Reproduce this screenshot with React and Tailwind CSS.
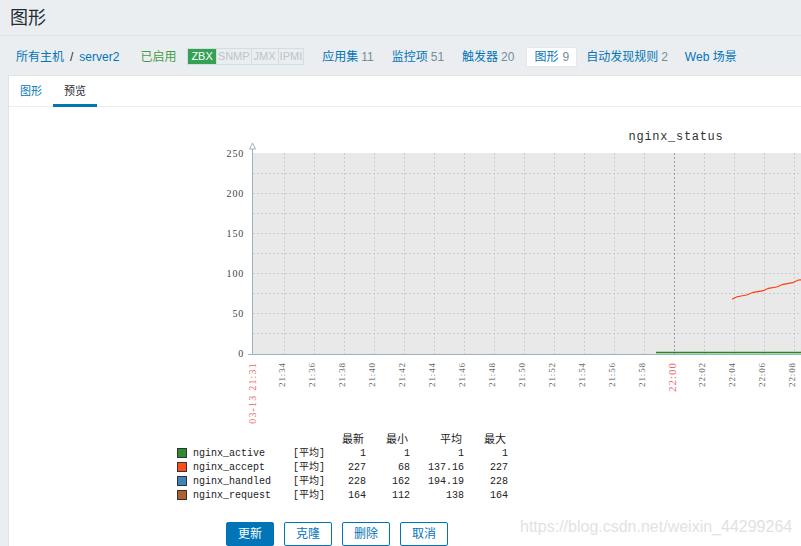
import React from 'react';

// 图形预览页面 (Zabbix 主机图形预览)
const navItems = [
  { label: '应用集', count: 11 },
  { label: '监控项', count: 51 },
  { label: '触发器', count: 20 },
];

const legend = [
  { name: 'nginx_active', color: '#2e8b2e', last: '1', min: '1', avg: '1', max: '1' },
  { name: 'nginx_accept', color: '#ff4d1a', last: '227', min: '68', avg: '137.16', max: '227' },
  { name: 'nginx_handled', color: '#3d85b8', last: '228', min: '162', avg: '194.19', max: '228' },
  { name: 'nginx_request', color: '#b0602a', last: '164', min: '112', avg: '138', max: '164' },
];

const ticks = [];
for (let m = 34; m <= 68; m += 2) {
  const h = 21 + Math.floor(m / 60);
  const mm = m % 60;
  ticks.push({ x: 284 + (m - 34) * 15, label: `${h}:${String(mm).padStart(2, '0')}` });
}

const accept = [
  [732, 299.3], [737, 296.7], [746.7, 295], [753.3, 292.3], [763.3, 290.7], [768.3, 288.3],
  [776.7, 287], [783.3, 284.3], [792.7, 282.7], [798.3, 280], [806, 279.5], [812, 277], [820, 276],
];

function Chart() {
  const serif = { fontFamily: '"Liberation Serif", serif' };
  return (
    <svg width="620" height="323" viewBox="200 107 620 323" className="block">
      <text x="676" y="140" textAnchor="middle" fontSize="12" letterSpacing="0.7" fill="#333"
        style={{ fontFamily: '"Liberation Mono", monospace' }}>nginx_status</text>

      <rect x="253" y="153" width="567" height="201" fill="#e9e9e9" />
      {[173, 193, 213, 233, 253, 273, 293, 313, 333].map((y) => (
        <line key={y} x1="253" x2="820" y1={y + 0.5} y2={y + 0.5} stroke="#c3ced5" strokeDasharray="2 2" />
      ))}
      {ticks.map((t) => (
        <line key={t.x} x1={t.x + 0.5} x2={t.x + 0.5} y1="153" y2="354"
          stroke={t.label === '22:00' ? '#8fa2ae' : '#c3ced5'} strokeDasharray="2 2" />
      ))}

      {/* 坐标轴 */}
      <line x1="252.5" x2="252.5" y1="148" y2="355" stroke="#9fb1bd" />
      <polygon points="252.5,143 249.5,149 255.5,149" fill="#fff" stroke="#9fb1bd" />
      <line x1="248" x2="820" y1="354.5" y2="354.5" stroke="#9fb1bd" />

      {[250, 200, 150, 100, 50, 0].map((v) => (
        <text key={v} x="244" y={153 + (250 - v) * 0.8 + 3.5} textAnchor="end" fontSize="10"
          letterSpacing="0.8" fill="#444" style={serif}>{v}</text>
      ))}

      {ticks.map((t) => {
        const red = t.label === '22:00';
        const ax = red ? t.x + 2 : t.x + 1;
        return (
          <text key={t.label} x={ax} y="362" textAnchor="end"
            fontSize={red ? 11 : 9} letterSpacing={red ? 1 : 0.9} fill={red ? '#e86a6a' : '#666'}
            transform={`rotate(-90 ${ax} 362)`} style={serif}>{t.label}</text>
        );
      })}
      <text x="256" y="362" textAnchor="end" fontSize="10" letterSpacing="1.2" fill="#e86a6a"
        transform="rotate(-90 256 362)" style={serif}>03-13 21:31</text>

      <line x1="656" x2="820" y1="352.5" y2="352.5" stroke="#1f8b1f" strokeWidth="1.5" />
      <polyline points={accept.map((p) => p.join(',')).join(' ')} fill="none" stroke="#ff3d10" strokeWidth="1.2" />
    </svg>
  );
}

export default function App() {
  const mono = { fontFamily: '"Liberation Mono", "Noto Sans CJK SC", monospace' };
  return (
    <div className="relative w-[801px] h-[546px] overflow-hidden bg-[#ebeef0] text-[#1f2c33]"
      style={{ fontFamily: '"Liberation Sans", "Noto Sans CJK SC", sans-serif' }}>
      {/* 标题 */}
      <div className="h-[36px] border-b border-[#dfe4e7] flex items-center px-[10px]">
        <h1 className="text-[18px] leading-none">图形</h1>
      </div>

      {/* 面包屑导航 */}
      <div className="h-[39px] flex items-center pl-[16px] pt-[2px] text-[12px]">
        <span className="text-[#0275b8]">所有主机</span>
        <span className="mx-[6px]">/</span>
        <span className="text-[#0275b8]">server2</span>
        <span className="ml-[21px] text-[#429e47]">已启用</span>
        <div className="ml-[11px] flex h-[17px] border border-[#d5dde2] text-[11px] leading-[15px]">
          <span className="bg-[#34a153] text-white px-[3px]">ZBX</span>
          <span className="text-[#b9c5cc] px-[1px] border-l border-[#d5dde2]">SNMP</span>
          <span className="text-[#b9c5cc] px-[2px] border-l border-[#d5dde2]">JMX</span>
          <span className="text-[#b9c5cc] px-[1px] border-l border-[#d5dde2]">IPMI</span>
        </div>
        <div className="ml-[18px] flex items-center gap-[18px]">
          {navItems.map((n) => (
            <span key={n.label}>
              <span className="text-[#0275b8]">{n.label}</span>
              <span className="text-[#768d99] ml-[3px]">{n.count}</span>
            </span>
          ))}
        </div>
        <div className="ml-[12px] h-[20px] px-[7px] bg-white border border-[#e3e8eb] flex items-center">
          <span className="text-[#0275b8]">图形</span>
          <span className="text-[#768d99] ml-[4px]">9</span>
        </div>
        <span className="ml-[9px]">
          <span className="text-[#0275b8]">自动发现规则</span>
          <span className="text-[#768d99] ml-[3px]">2</span>
        </span>
        <span className="ml-[17px] text-[#0275b8]">Web 场景</span>
      </div>

      {/* 内容面板 */}
      <div className="ml-[8px] h-[471px] bg-white border-l border-t border-[#dfe4e7]">
        <div className="h-[31px] flex border-b border-[#ebeef0] text-[11px]">
          <div className="px-[11px] flex items-center text-[#0275b8]">图形</div>
          <div className="px-[11px] flex items-center border-b-[3px] border-[#0275b8] mb-[-1px] pt-[3px]">预览</div>
        </div>

        <div className="ml-[191px]">
          <Chart />
        </div>

        {/* 图例 */}
        <div className="ml-[168px] mt-[1px] grid grid-cols-[16px_100px_40px_33px_44px_54px_44px] text-[10px] text-[#222]" style={mono}>
          <div className="col-span-3 h-[15px]" />
          {['最新', '最小', '平均', '最大'].map((h) => (
            <div key={h} className="h-[15px] flex items-center justify-end pr-[2px] text-[11px]"
              style={{ fontFamily: '"Noto Sans CJK SC", serif' }}>{h}</div>
          ))}
          {legend.map((l) => (
            <React.Fragment key={l.name}>
              <div className="h-[14px] flex items-center">
                <span className="w-[10px] h-[10px] border border-[#333]" style={{ backgroundColor: l.color }} />
              </div>
              <div className="h-[14px] flex items-center">{l.name}</div>
              <div className="h-[14px] flex items-center">[平均]</div>
              <div className="h-[14px] flex items-center justify-end">{l.last}</div>
              <div className="h-[14px] flex items-center justify-end">{l.min}</div>
              <div className="h-[14px] flex items-center justify-end">{l.avg}</div>
              <div className="h-[14px] flex items-center justify-end">{l.max}</div>
            </React.Fragment>
          ))}
        </div>

        {/* 按钮 */}
        <div className="ml-[217px] mt-[20px] flex gap-[10px] text-[12px]">
          <button className="w-[48px] h-[24px] rounded-[2px] bg-[#0275b8] border border-[#0275b8] text-white">更新</button>
          <button className="w-[48px] h-[24px] rounded-[2px] bg-white border border-[#0275b8] text-[#0275b8]">克隆</button>
          <button className="w-[48px] h-[24px] rounded-[2px] bg-white border border-[#0275b8] text-[#0275b8]">删除</button>
          <button className="w-[48px] h-[24px] rounded-[2px] bg-white border border-[#0275b8] text-[#0275b8]">取消</button>
        </div>
      </div>

      {/* 水印 */}
      <div className="absolute left-[520px] top-[515px] text-[16px] text-[#e2e2e2] whitespace-nowrap">
        https://blog.csdn.net/weixin_44299264
      </div>
    </div>
  );
}
